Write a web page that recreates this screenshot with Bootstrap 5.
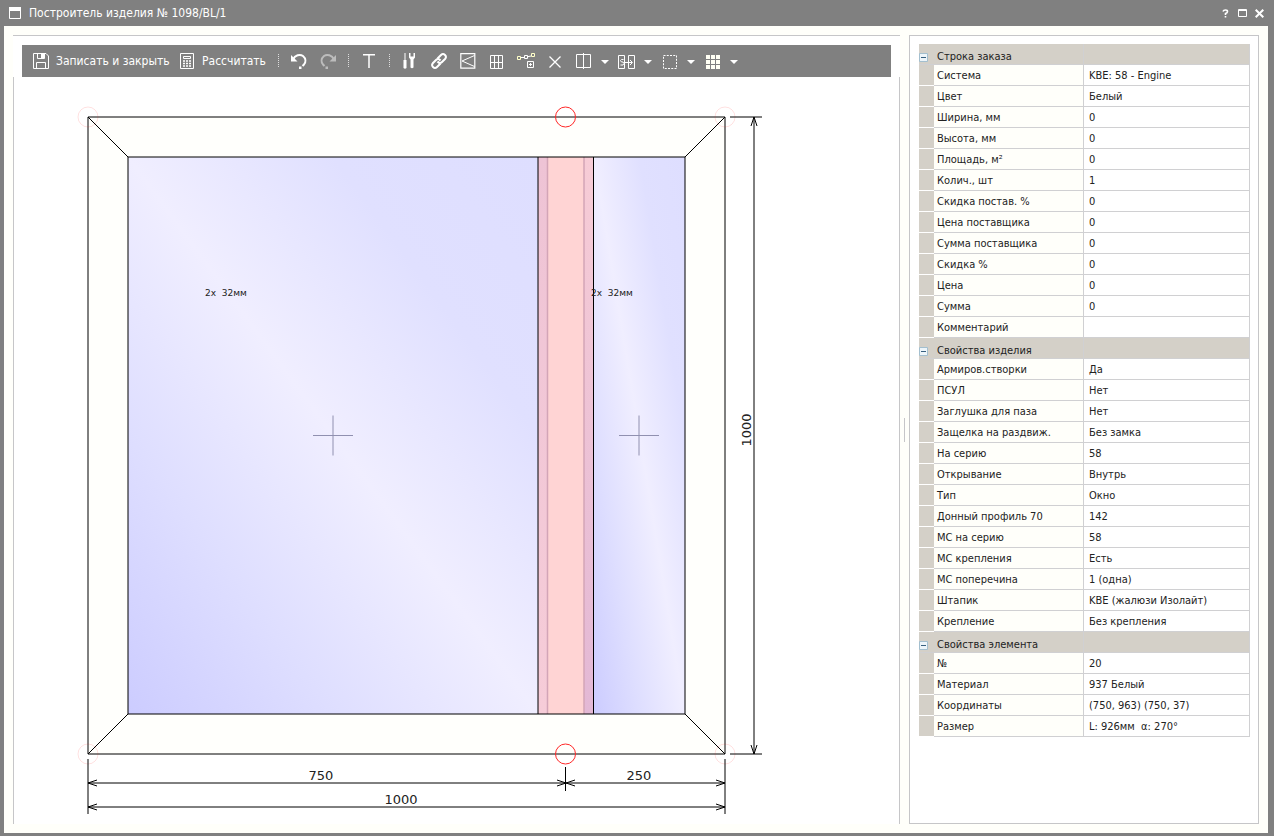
<!DOCTYPE html>
<html lang="ru">
<head>
<meta charset="utf-8">
<meta name="viewport" content="width=device-width, initial-scale=1">
<title>Построитель изделия № 1098/BL/1</title>
<link href="https://cdn.jsdelivr.net/npm/bootstrap@5.3.0/dist/css/bootstrap.min.css" rel="stylesheet">
<style>
body{background:#808080;font-family:"DejaVu Sans Condensed","DejaVu Sans",sans-serif;font-size:11px;line-height:14px;color:#222}
.app-window{padding:0 6px 3px 4px}
.title-bar{height:26px;padding:0 0 0 5px;color:#fff}
.title-bar h1{font-size:12px;line-height:16px}
.win-btn{width:17px;height:17px}
.tool-btn,.win-btn,.toggle-btn{--bs-btn-padding-x:0;--bs-btn-padding-y:0;--bs-btn-border-width:0;--bs-btn-border-radius:0;--bs-btn-line-height:16px;--bs-btn-font-size:12px;--bs-btn-color:#fff;--bs-btn-hover-color:#fff;--bs-btn-hover-bg:#999}
.workspace{background:#fffffa;padding:9px}
.editor{background:#fff;border-top:1px solid #c6c6c8}
.tool-strip{background:#808080;margin:9px 9px 0 9px;padding-left:4px;height:32px}
.tool-btn{width:29px;height:32px;flex:none;white-space:nowrap}
.tool-btn svg{flex:none}
.tool-btn.labelled{padding-left:7px;gap:7px}
.tool-btn.save{width:146px}
.tool-btn.calc{width:100px}
.tool-btn.drop{width:14px}
.tool-sep{width:12px;height:14px;flex:none}
.tool-sep::before{content:"";display:block;width:1px;height:14px;margin:0 auto;background:repeating-linear-gradient(#ddd 0 1px,transparent 1px 2px)}
.canvas-area{border:solid #c6c6c8;border-width:0 1px}
.splitter{width:9px;flex:none}
.splitter i{width:1px;height:24px;background:#c6c6c8}
.props{width:350px;flex:none;background:#fff;border:1px solid #c6c6c8;padding:8px 8px 8px 9px}
.prop-table{table-layout:fixed;border-collapse:separate;border-spacing:0;border-right:1px solid #d0d0d2;width:331px}
.prop-table th,.prop-table td{height:21px;padding:2px 0 0 3px;font-weight:400;vertical-align:middle;border-bottom:1px solid #d0d0d2;white-space:nowrap}
.prop-table td:first-child{background:#d4d0c8;padding:0;border-bottom-color:#fff}
.prop-table tbody th{background:#fffffa;border-right:1px solid #d0d0d2}
.prop-table td:last-child{padding-left:5px}
.prop-table .group th,.prop-table .group td{background:#d4d0c8;border-bottom-color:#d0d0d2;padding-top:6px}
.toggle-btn{width:9px;height:9px}
.toggle-btn svg,.win-btn svg{display:block;margin:auto}
</style>
</head>
<body>
<div class="app-window d-flex flex-column min-vh-100">
<header class="title-bar d-flex align-items-center">
  <svg class="me-2" width="12" height="12" fill="none" stroke="#fff"><path d="M.5 .5h11v11H.5z"/><path d="M0 0h12v4H0z" fill="#fff" stroke="none"/></svg>
  <h1 class="m-0 flex-grow-1">Построитель изделия № 1098/BL/1</h1>
  <button class="btn win-btn" aria-label="Справка"><svg width="7" height="9" fill="none" stroke="#fff" stroke-width="1.600"><path d="M1 2.500Q1.500 1 3.500 1 5.500 1 5.500 2.500 5.500 4 3.500 4.500V6M3.500 7v1.600"/></svg></button>
  <button class="btn win-btn" aria-label="Развернуть"><svg width="9" height="8" fill="none" stroke="#fff"><path d="M.5 .5h8v7h-8zM0 1.500h9"/></svg></button>
  <button class="btn win-btn" aria-label="Закрыть"><svg width="9" height="9" stroke="#fff" stroke-width="2"><path d="M.7 .7l7.600 7.600M8.300 .7L.7 8.300"/></svg></button>
</header>
<main class="workspace d-flex flex-grow-1">
  <section class="editor flex-grow-1 d-flex flex-column">
    <div class="tool-strip d-flex align-items-center" role="toolbar" aria-label="Инструменты">
      <button class="btn tool-btn labelled save d-flex align-items-center"><svg width="16" height="16" fill="none" stroke="#fff"><path d="M.5 .5h12.500l2.500 2.500v12.500H.5zM4.500 .5v5h7v-5M3.500 15.500V9.500h9v6"/><path d="M8 1h3v4H8z" fill="#fff" stroke="none"/></svg><span>Записать и закрыть</span></button>
      <button class="btn tool-btn labelled calc d-flex align-items-center"><svg width="16" height="16" fill="none" stroke="#fff"><path d="M1.500 .5h13v15h-13zM4.500 3.500h7v2h-7z"/><path d="M4 8h8M4 10.500h8M4 13h8" stroke-width="1.500" stroke-dasharray="2 1"/></svg><span>Рассчитать</span></button>
      <span class="tool-sep"></span>
      <button class="btn tool-btn" aria-label="Отменить"><svg width="18" height="18" fill="none" stroke="#fff" stroke-width="2"><path d="M3 7.500C5 3 10 2 13 4c3 2.500 3 6 1 8.500l-1.500 1.500"/><path d="M1 3v6.500h6.500z" fill="#fff" stroke="none"/><path d="M9 14.500h2.500v2.500H9z" fill="#fff" stroke="none"/></svg></button>
      <button class="btn tool-btn" aria-label="Повторить"><svg width="18" height="18" fill="none" stroke="#bcbcbc" stroke-width="2"><path d="M15 7.500C13 3 8 2 5 4 2 6.500 2 10 4 12.500L5.500 14"/><path d="M17 3v6.500h-6.500z" fill="#bcbcbc" stroke="none"/><path d="M6.500 14.500H9v2.500H6.500z" fill="#bcbcbc" stroke="none"/></svg></button>
      <span class="tool-sep"></span>
      <button class="btn tool-btn" aria-label="Текст"><svg width="12" height="16" fill="none" stroke="#fff" stroke-width="1.500"><path d="M0 1.700h12M6 2v13"/></svg></button>
      <span class="tool-sep"></span>
      <button class="btn tool-btn" aria-label="Настройка"><svg width="14" height="16" fill="#fff"><path d="M1.500 0h1v7h1v8q-1.500 1.500-3 0V7h1zM6 0h1.500v3.500h3V0H12v4.500L10.500 6.500v8q-1.500 1.500-3 0v-8L6 4.500z"/></svg></button>
      <button class="btn tool-btn" aria-label="Связать"><svg width="18" height="18" viewBox="0 0 18 18" fill="none" stroke="#fff" stroke-width="2"><path d="M7.500 6.500l3.500-3.500c1.500-1.500 3-1 4 0s1.300 2.500 0 4L12 10c-1.500 1.500-3 1.300-4.500-.5M10.500 11.500L7 15c-1.500 1.500-3 1-4 0s-1.300-2.500 0-4L6 8c1.500-1.500 3-1.300 4.500 .5"/></svg></button>
      <button class="btn tool-btn" aria-label="Створка"><svg width="16" height="16" fill="none" stroke="#fff"><path d="M.8 .7h14v14.500H.8z" stroke-width="1.200"/><path d="M14.500 2.500L2 8l12.500 5.500"/></svg></button>
      <button class="btn tool-btn" aria-label="Раскладка"><svg width="13" height="14" fill="none" stroke="#fff"><path d="M.5 .5h12v13H.5zM4.500 0v14M8.500 0v14M0 7.500h13"/></svg></button>
      <button class="btn tool-btn" aria-label="Добавить узел"><svg width="18" height="16" fill="none" stroke="#fff"><path d="M3 4.500h4l7-1.500" stroke-width="1.200"/><path d="M.5 3.500h3v3h-3zM14.500 .5h3v3h-3z" fill="#808080" stroke="#ffffc8"/><path d="M7.500 2.500h3v3h-3z" fill="#808080"/><path d="M10.500 8.500h6v6h-6zM13.500 10v3M12 11.500h3"/></svg></button>
      <button class="btn tool-btn" aria-label="Удалить"><svg width="12" height="12" stroke="#fff" stroke-width="1.300"><path d="M.5 .5l11 11M11.500 .5l-11 11"/></svg></button>
      <button class="btn tool-btn" aria-label="Разделить"><svg width="15" height="16" fill="none" stroke="#fff"><path d="M.5 1.500h14v13H.5zM7.500 0v16"/></svg></button>
      <button class="btn tool-btn drop" aria-label="Варианты деления"><svg width="8" height="4" fill="#fff"><path d="M0 0h8L4 4z"/></svg></button>
      <button class="btn tool-btn" aria-label="Заменить"><svg width="17" height="14" fill="none" stroke="#fff"><path d="M.5 .5h6v13h-6zM10.500 .5h6v13h-6z"/><path d="M5.500 4.500h-2l-1 1 1 1.500h1.500l1 1.500-1 1.500H2.500M7 7.500h7M12 5l2.500 2.500L12 10"/></svg></button>
      <button class="btn tool-btn drop" aria-label="Варианты замены"><svg width="8" height="4" fill="#fff"><path d="M0 0h8L4 4z"/></svg></button>
      <button class="btn tool-btn" aria-label="Выделить"><svg width="14" height="14" fill="none" stroke="#fff"><path d="M.5 .5h13v13H.5z" stroke-dasharray="2 1.250"/></svg></button>
      <button class="btn tool-btn drop" aria-label="Варианты выделения"><svg width="8" height="4" fill="#fff"><path d="M0 0h8L4 4z"/></svg></button>
      <button class="btn tool-btn" aria-label="Сетка"><svg width="14" height="14" stroke="#fffff4" stroke-width="4"><path d="M0 2h14M0 7h14M0 12h14" stroke-dasharray="4 1"/></svg></button>
      <button class="btn tool-btn drop" aria-label="Варианты сетки"><svg width="8" height="4" fill="#fff"><path d="M0 0h8L4 4z"/></svg></button>
    </div>
    <div class="canvas-area flex-grow-1">
      <svg class="d-block w-100" viewBox="14 77 885 747" fill="none" stroke="#000" font-family="DejaVu Sans, sans-serif" font-size="13" role="img" aria-label="Чертёж изделия">
        <defs>
          <linearGradient id="glass" x1="0" y1="1" x2="1" y2="0"><stop stop-color="#ccccff"/><stop offset=".25" stop-color="#dedeff"/><stop offset=".5" stop-color="#f0eeff"/><stop offset=".75" stop-color="#e0e0ff"/><stop offset="1" stop-color="#dedeff"/></linearGradient>
          <linearGradient id="edgeLeft" x1="0" y1="0" x2="0" y2="1"><stop stop-color="#eec3d5"/><stop offset="1" stop-color="#f6ccd8"/></linearGradient>
          <linearGradient id="edgeRight" x1="0" y1="0" x2="0" y2="1"><stop stop-color="#f7ccd6"/><stop offset="1" stop-color="#e3b8d5"/></linearGradient>
        </defs>
        <path d="M88 117h637v637H88z" fill="#fffffc"/>
        <g stroke="none"><path d="M128 157h410v557H128z" fill="url(#glass)"/><path d="M594 157h91v557h-91z" fill="url(#glass)"/><path d="M538 157h56v557h-56z" fill="#ffd4d4"/><path d="M538 157h9v557h-9z" fill="url(#edgeLeft)"/><path d="M584 157h10v557h-10z" fill="url(#edgeRight)"/></g>
        <path d="M547.500 157v557M584 157v557" stroke="#d3a5b7" stroke-width="1.500"/>
        <path d="M128 157h557v557H128zM538 157v557M593.500 157v557"/>
        <path d="M88 117l40 40M725 117l-40 40M88 754l40-40M725 754l-40-40"/>
        <g stroke="#9090b0"><path d="M313 435.500h40M619 435.500h40"/><path d="M333 415.500v40M639 415.500v40"/></g>
        <g stroke="#ff0000" stroke-opacity=".12"><circle cx="88" cy="117" r="10"/><circle cx="725" cy="117" r="10"/><circle cx="88" cy="754" r="10"/><circle cx="725" cy="754" r="10"/></g>
        <g stroke="#ff2828"><circle cx="565.500" cy="117" r="10"/><circle cx="565.500" cy="754" r="10"/></g>
        <path d="M88 759v55M725 759v55M88 783h637M88 807h637M565.500 767v24M754 117v637M730 117h32M730 754h32"/>
        <path d="M97 780l-9 3 9 3M97 804l-9 3 9 3M716 780l9 3-9 3M716 804l9 3-9 3M557 780l9 3-9 3M575 780l-9 3 9 3M751 126l3-9 3 9M751 745l3 9 3-9"/>
        <g fill="#222" stroke="none" text-anchor="middle"><text x="321" y="780">750</text><text x="639" y="780">250</text><text x="401" y="804">1000</text><text transform="rotate(-90 751 430)" x="751" y="430">1000</text>
        <g font-size="9"><text x="226" y="296">2x&#160;&#160;32мм</text><text x="612" y="296">2x&#160;&#160;32мм</text></g></g>
      </svg>
    </div>
  </section>
  <div class="splitter d-flex align-items-center justify-content-center"><i></i></div>
  <aside class="props">
    <table class="prop-table">
      <colgroup><col style="width:15px"><col style="width:150px"><col></colgroup>
      <tbody>
      <tr class="group"><td><button class="btn toggle-btn d-block" aria-label="Свернуть"><svg width="9" height="9"><path d="M.5 .5h8v8h-8z" fill="#edf5fa" stroke="#a3bfcf"/><path d="M2 4.500h5" stroke="#376080"/></svg></button></td><th>Строка заказа</th><td></td></tr>
      <tr><td></td><th>Система</th><td>KBE: 58 - Engine</td></tr>
      <tr><td></td><th>Цвет</th><td>Белый</td></tr>
      <tr><td></td><th>Ширина, мм</th><td>0</td></tr>
      <tr><td></td><th>Высота, мм</th><td>0</td></tr>
      <tr><td></td><th>Площадь, м²</th><td>0</td></tr>
      <tr><td></td><th>Колич., шт</th><td>1</td></tr>
      <tr><td></td><th>Скидка постав. %</th><td>0</td></tr>
      <tr><td></td><th>Цена поставщика</th><td>0</td></tr>
      <tr><td></td><th>Сумма поставщика</th><td>0</td></tr>
      <tr><td></td><th>Скидка %</th><td>0</td></tr>
      <tr><td></td><th>Цена</th><td>0</td></tr>
      <tr><td></td><th>Сумма</th><td>0</td></tr>
      <tr><td></td><th>Комментарий</th><td></td></tr>
      <tr class="group"><td><button class="btn toggle-btn d-block" aria-label="Свернуть"><svg width="9" height="9"><path d="M.5 .5h8v8h-8z" fill="#edf5fa" stroke="#a3bfcf"/><path d="M2 4.500h5" stroke="#376080"/></svg></button></td><th>Свойства изделия</th><td></td></tr>
      <tr><td></td><th>Армиров.створки</th><td>Да</td></tr>
      <tr><td></td><th>ПСУЛ</th><td>Нет</td></tr>
      <tr><td></td><th>Заглушка для паза</th><td>Нет</td></tr>
      <tr><td></td><th>Защелка на раздвиж.</th><td>Без замка</td></tr>
      <tr><td></td><th>На серию</th><td>58</td></tr>
      <tr><td></td><th>Открывание</th><td>Внутрь</td></tr>
      <tr><td></td><th>Тип</th><td>Окно</td></tr>
      <tr><td></td><th>Донный профиль 70</th><td>142</td></tr>
      <tr><td></td><th>МС на серию</th><td>58</td></tr>
      <tr><td></td><th>МС крепления</th><td>Есть</td></tr>
      <tr><td></td><th>МС поперечина</th><td>1 (одна)</td></tr>
      <tr><td></td><th>Штапик</th><td>KBE (жалюзи Изолайт)</td></tr>
      <tr><td></td><th>Крепление</th><td>Без крепления</td></tr>
      <tr class="group"><td><button class="btn toggle-btn d-block" aria-label="Свернуть"><svg width="9" height="9"><path d="M.5 .5h8v8h-8z" fill="#edf5fa" stroke="#a3bfcf"/><path d="M2 4.500h5" stroke="#376080"/></svg></button></td><th>Свойства элемента</th><td></td></tr>
      <tr><td></td><th>№</th><td>20</td></tr>
      <tr><td></td><th>Материал</th><td>937 Белый</td></tr>
      <tr><td></td><th>Координаты</th><td>(750, 963) (750, 37)</td></tr>
      <tr><td></td><th>Размер</th><td>L: 926мм&nbsp; α: 270°</td></tr>
      </tbody>
    </table>
  </aside>
</main>
</div>
<script src="https://cdn.jsdelivr.net/npm/bootstrap@5.3.0/dist/js/bootstrap.bundle.min.js"></script>
</body>
</html>
